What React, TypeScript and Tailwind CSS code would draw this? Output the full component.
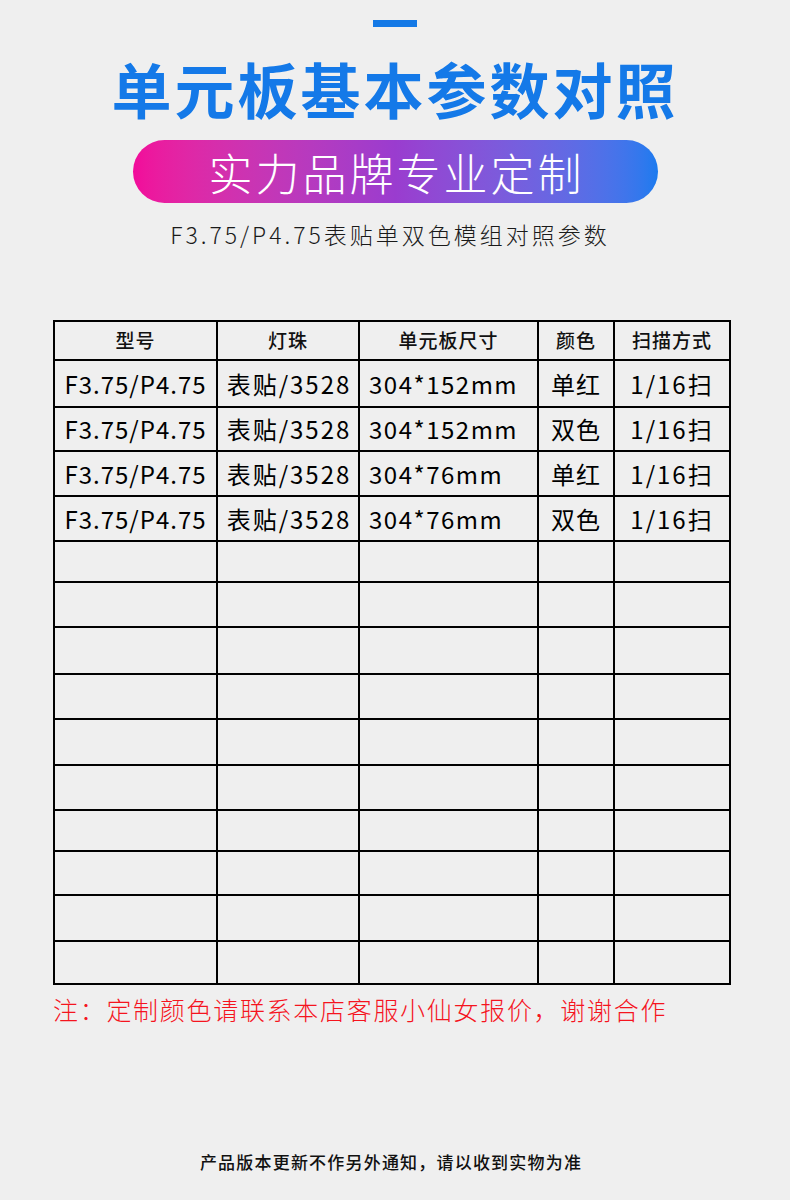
import React from "react";

const rows: { h: string; cells: string[] }[] = [
  { h: "h-[47px]", cells: ["F3.75/P4.75", "表贴/3528", "304*152mm", "单红", "1/16扫"] },
  { h: "h-[44px]", cells: ["F3.75/P4.75", "表贴/3528", "304*152mm", "双色", "1/16扫"] },
  { h: "h-[45px]", cells: ["F3.75/P4.75", "表贴/3528", "304*76mm", "单红", "1/16扫"] },
  { h: "h-[45px]", cells: ["F3.75/P4.75", "表贴/3528", "304*76mm", "双色", "1/16扫"] },
  { h: "h-[41px]", cells: ["", "", "", "", ""] },
  { h: "h-[45px]", cells: ["", "", "", "", ""] },
  { h: "h-[47px]", cells: ["", "", "", "", ""] },
  { h: "h-[45px]", cells: ["", "", "", "", ""] },
  { h: "h-[46px]", cells: ["", "", "", "", ""] },
  { h: "h-[45px]", cells: ["", "", "", "", ""] },
  { h: "h-[41px]", cells: ["", "", "", "", ""] },
  { h: "h-[44px]", cells: ["", "", "", "", ""] },
  { h: "h-[46px]", cells: ["", "", "", "", ""] },
  { h: "h-[43px]", cells: ["", "", "", "", ""] },
];

const headers = ["型号", "灯珠", "单元板尺寸", "颜色", "扫描方式"];

const cellClass = [
  "border-r-2 border-b-2 border-black flex items-center justify-center text-[24px] text-black tracking-[1px] whitespace-nowrap",
  "border-r-2 border-b-2 border-black flex items-center justify-center text-[24px] text-black tracking-[2px] whitespace-nowrap pl-[2px]",
  "border-r-2 border-b-2 border-black flex items-center pl-[9px] text-[24px] text-black tracking-[1.5px] whitespace-nowrap",
  "border-r-2 border-b-2 border-black flex items-center justify-center text-[24px] text-black tracking-[1px] whitespace-nowrap",
  "border-r-2 border-b-2 border-black flex items-center justify-center text-[24px] text-black tracking-[2px] whitespace-nowrap",
];

const font = { fontFamily: '"Noto Sans CJK SC", "Noto Sans", sans-serif' };

export default function App() {
  return (
    <div className="w-[790px] h-[1200px] bg-[#efefef] flex flex-col items-center" style={font}>
      <div className="mt-[20px] w-[44px] h-[7px] bg-[#1479e6]" />
      <div className="mt-[19px] text-[60px] font-bold leading-[84px] tracking-[3px] text-[#1479e8]">
        单元板基本参数对照
      </div>
      <div className="mt-[10px] w-[525px] h-[63px] rounded-full bg-gradient-to-r from-[#f20a9a] via-[#9a3ccf] to-[#1a7bef] flex items-center justify-center">
        <span className="text-[44px] leading-none text-white font-light tracking-[3px] pl-[3px]">实力品牌专业定制</span>
      </div>
      <div className="mt-[16px] text-[23px] leading-[30px] text-[#1a1a1a] font-light tracking-[3px] pr-[10px]">
        F3.75/P4.75表贴单双色模组对照参数
      </div>
      <div className="mt-[71px] self-start ml-[53px] w-[678px] border-l-2 border-t-2 border-black">
        <div className="grid grid-cols-[163px_142px_179px_76px_116px] h-[39px]">
          {headers.map((t, i) => (
            <div key={i} className="border-r-2 border-b-2 border-black flex items-center justify-center text-[19px] font-medium text-[#111] tracking-[1px]">
              {t}
            </div>
          ))}
        </div>
        {rows.map((r, ri) => (
          <div key={ri} className={`grid grid-cols-[163px_142px_179px_76px_116px] ${r.h}`}>
            {r.cells.map((c, ci) => (
              <div key={ci} className={cellClass[ci]}>
                {c}
              </div>
            ))}
          </div>
        ))}
      </div>
      <div className="self-start ml-[53px] mt-[7px] text-[25px] leading-[34px] text-[#f5141e] font-light tracking-[1.7px]">
        注：定制颜色请联系本店客服小仙女报价，谢谢合作
      </div>
      <div className="mt-[124px] text-[17px] leading-[24px] font-medium text-[#111] tracking-[1.2px] pr-[8px]">
        产品版本更新不作另外通知，请以收到实物为准
      </div>
    </div>
  );
}
